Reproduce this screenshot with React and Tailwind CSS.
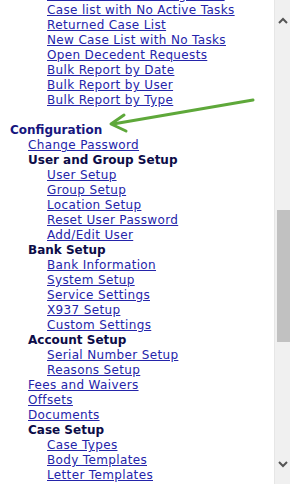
import React from 'react'

const items = [
  { t: 'Case list with Pending Tasks', l: 2, link: true },
  { t: 'Case list with No Active Tasks', l: 2, link: true },
  { t: 'Returned Case List', l: 2, link: true },
  { t: 'New Case List with No Tasks', l: 2, link: true },
  { t: 'Open Decedent Requests', l: 2, link: true },
  { t: 'Bulk Report by Date', l: 2, link: true },
  { t: 'Bulk Report by User', l: 2, link: true },
  { t: 'Bulk Report by Type', l: 2, link: true },
  { t: '', l: 0, spacer: true },
  { t: 'Configuration', l: 0, top: true },
  { t: 'Change Password', l: 1, link: true },
  { t: 'User and Group Setup', l: 1 },
  { t: 'User Setup', l: 2, link: true },
  { t: 'Group Setup', l: 2, link: true },
  { t: 'Location Setup', l: 2, link: true },
  { t: 'Reset User Password', l: 2, link: true },
  { t: 'Add/Edit User', l: 2, link: true },
  { t: 'Bank Setup', l: 1 },
  { t: 'Bank Information', l: 2, link: true },
  { t: 'System Setup', l: 2, link: true },
  { t: 'Service Settings', l: 2, link: true },
  { t: 'X937 Setup', l: 2, link: true },
  { t: 'Custom Settings', l: 2, link: true },
  { t: 'Account Setup', l: 1 },
  { t: 'Serial Number Setup', l: 2, link: true },
  { t: 'Reasons Setup', l: 2, link: true },
  { t: 'Fees and Waivers', l: 1, link: true },
  { t: 'Offsets', l: 1, link: true },
  { t: 'Documents', l: 1, link: true },
  { t: 'Case Setup', l: 1 },
  { t: 'Case Types', l: 2, link: true },
  { t: 'Body Templates', l: 2, link: true },
  { t: 'Letter Templates', l: 2, link: true },
  { t: 'Email Templates', l: 2, link: true },
]

const indent = ['pl-[10px]', 'pl-[28px]', 'pl-[47px]']

function Row({ item }) {
  if (item.spacer) return <div className="h-[15px]" />
  if (item.link) {
    return (
      <div className={`${indent[item.l]} h-[15px] leading-[15px] whitespace-nowrap tracking-[0.35px]`}>
        <a href="#" className="text-[#2424aa] underline">{item.t}</a>
      </div>
    )
  }
  return (
    <div className={`${indent[item.l]} h-[15px] leading-[15px] whitespace-nowrap font-bold ${item.top ? 'text-[#16167e]' : 'text-[#0c0c48]'}`}>
      {item.t}
    </div>
  )
}

export default function App() {
  return (
    <div className="relative w-[290px] h-[484px] flex bg-white overflow-hidden" style={{ fontFamily: '"DejaVu Sans", Verdana, sans-serif' }}>
      <div className="flex-1 overflow-hidden text-[12px]">
        <div className="-mt-[12px]">
          {items.map((it, i) => <Row key={i} item={it} />)}
        </div>
      </div>

      {/* scrollbar */}
      <div className="w-[16px] h-full bg-[#f0f0f0] border-l border-[#e6e6e6] flex flex-col items-center">
        <div className="h-[34px] flex items-center justify-center pt-[6px]">
          <svg width="10" height="7" viewBox="0 0 10 7">
            <path d="M1 6 L5 2 L9 6" stroke="#555" strokeWidth="2" fill="none" />
          </svg>
        </div>
        <div className="flex-1 w-full flex flex-col">
          <div className="h-[176px]" />
          <div className="h-[132px] w-[13px] self-end bg-[#c1c1c1]" />
        </div>
        <div className="h-[34px] flex items-center justify-center pb-[6px]">
          <svg width="10" height="7" viewBox="0 0 10 7">
            <path d="M1 1 L5 5 L9 1" stroke="#555" strokeWidth="2" fill="none" />
          </svg>
        </div>
      </div>

      {/* green annotation arrow */}
      <svg className="absolute left-0 top-0 pointer-events-none" width="290" height="484">
        <path d="M253 100 L113 124" stroke="#5ea83a" strokeWidth="3" strokeLinecap="round" fill="none" />
        <path d="M124 115 L111 124 L126 131" stroke="#5ea83a" strokeWidth="3" strokeLinecap="round" strokeLinejoin="round" fill="none" />
      </svg>
    </div>
  )
}
